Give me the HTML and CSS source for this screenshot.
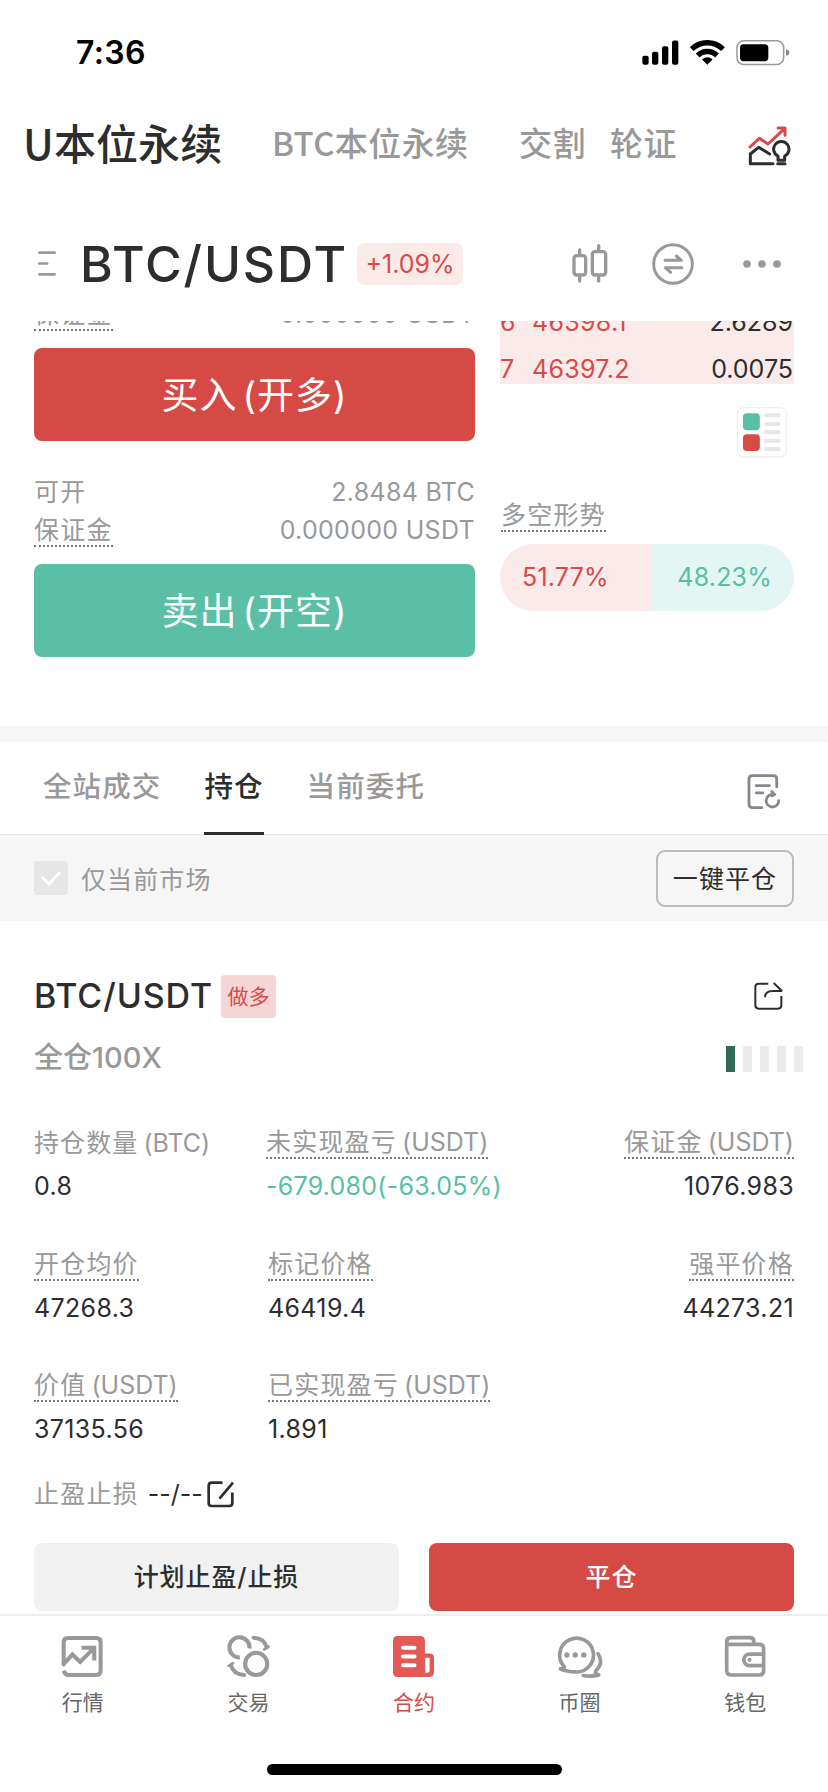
FILE: index.html
```html
<!DOCTYPE html>
<html lang="zh-CN">
<head>
<meta charset="utf-8">
<title>BTC/USDT 合约</title>
<link rel="stylesheet" href="styles.css">
</head>
<body>
<div class="app">
  <div class="status">
    <span class="time">7:36</span>
    <svg class="signals" viewBox="680 114 450 86" width="150" height="29">
      <rect x="684" y="167" width="19" height="27" rx="6"/><rect x="713" y="155" width="19" height="39" rx="6"/><rect x="743" y="138" width="19" height="56" rx="6"/><rect x="773" y="121" width="19" height="73" rx="6"/>
      <g fill="none" stroke="#000" stroke-width="16"><path d="M832 147a67 67 0 0 1 94 0"/><path d="M850 166a41 41 0 0 1 58 0"/></g>
      <path d="M863 178q16-13 32 0l-16 16z"/>
      <rect x="968" y="122" width="140" height="71" rx="20" fill="none" stroke="#999" stroke-width="4.5"/>
      <rect x="977" y="132" width="85" height="51" rx="11"/>
      <path d="M1115 147q10 2 10 10t-10 10z" fill="#888"/>
    </svg>
  </div>

  <div class="markets">
    <span class="market market-on">U本位永续</span>
    <span class="market market-btc">BTC本位永续</span>
    <span class="market market-delivery">交割</span>
    <span class="market">轮证</span>
    <svg class="market-icon" viewBox="1002 378 129 120" width="43" height="40" fill="none" stroke="#2d2d2d" stroke-width="9" stroke-linecap="round" stroke-linejoin="round">
      <path stroke="#d84a4a" d="M1008 441L1036 415L1062 432L1112 386M1092 384H1113V406"/>
      <path d="M1077 491H1009V462L1034 442L1067 462"/>
      <path d="M1092 481V468A23 23 0 1 1 1112 468V481ZM1091 491h22"/>
    </svg>
  </div>

  <div class="ticker">
    <svg class="menu" viewBox="114 754 53 74" width="18" height="25" stroke="#999" stroke-width="8" stroke-linecap="round"><path d="M118 759h45M118 791h23M118 823h45"/></svg>
    <span class="pair">BTC/USDT</span>
    <span class="change">+1.09%</span>
    <div class="ticker-tools">
      <svg viewBox="475 727 108 126" width="36" height="42" fill="none" stroke="#999" stroke-width="10" stroke-linecap="round"><rect x="481" y="765" width="35" height="58" rx="8"/><rect x="536" y="753" width="40" height="70" rx="8"/><path d="M498 748v14M498 826v15M555 735v14M555 826v15"/></svg>
      <svg viewBox="714 727 126 126" width="42" height="42" fill="none" stroke="#999" stroke-width="9" stroke-linecap="round" stroke-linejoin="round"><circle cx="777" cy="790" r="58"/><path d="M753 779h49l-15-13M803 801h-49l16 14"/></svg>
      <svg viewBox="988 778 114 24" width="38" height="8" fill="#999"><circle cx="1000" cy="790" r="11.5"/><circle cx="1045" cy="790" r="11.5"/><circle cx="1090" cy="790" r="11.5"/></svg>
    </div>
  </div>

  <div class="scroll">
    <div class="trade">
      <div class="order">
        <div class="info"><span class="tip">保证金</span><span class="amount">0.000000 USDT</span></div>
        <div class="btn buy">买入<span class="btn-side">(开多)</span></div>
        <div class="info info-first"><span class="name">可开</span><span class="amount">2.8484 BTC</span></div>
        <div class="info"><span class="tip">保证金</span><span class="amount">0.000000 USDT</span></div>
        <div class="btn sell">卖出<span class="btn-side">(开空)</span></div>
      </div>
      <div class="book">
        <div class="asks">
          <div class="asks-list">
            <div class="ask"><span class="rank">6</span><span class="price">46398.1</span><span class="qty">2.6289</span></div>
            <div class="ask"><span class="rank">7</span><span class="price">46397.2</span><span class="qty">0.0075</span></div>
          </div>
        </div>
        <svg class="depth" viewBox="769 323 155 154" width="52" height="51"><rect x="772" y="325" width="149" height="149" rx="20" fill="#fff" stroke="#f0f0f0" stroke-width="4"/><rect x="789" y="342" width="51" height="51" rx="12" fill="#57bfa3"/><rect x="789" y="405" width="51" height="51" rx="12" fill="#d84a46"/><path d="M859 348h38M859 374h38M859 399h38M859 425h38M859 450h38" stroke="#e6e6e6" stroke-width="12" stroke-linecap="round"/></svg>
        <span class="tip trend">多空形势</span>
        <div class="ratio"><span class="long">51.77%</span><span class="short">48.23%</span></div>
      </div>
    </div>

    <div class="divider"></div>

    <div class="tabs">
      <span class="tab">全站成交</span>
      <span class="tab tab-on">持仓</span>
      <span class="tab">当前委托</span>
      <svg class="history" viewBox="354 39 103 110" width="34" height="37" fill="none" stroke="#85898f" stroke-width="8.5" stroke-linecap="round" stroke-linejoin="round"><path d="M399 143H370q-10 0-10-10V56q0-10 10-10h64q10 0 10 10v24M382 76h40M382 98h20M450 122a19 19 0 1 1-17-19M429 94l9 9-8 4"/></svg>
    </div>

    <div class="filter">
      <svg class="check" viewBox="0 0 34 34" width="34" height="34"><rect width="34" height="34" rx="4" fill="#e6e6e6"/><path d="M8 16l7 7L26 11" fill="none" stroke="#fff" stroke-width="3"/></svg>
      <span class="filter-name">仅当前市场</span>
      <span class="close-all">一键平仓</span>
    </div>

    <div class="position">
      <div class="head">
        <span class="head-pair">BTC/USDT</span><span class="side">做多</span>
        <svg class="share" viewBox="437 68 87 84" width="29" height="28" fill="none" stroke="#2d2d2d" stroke-width="6"><path d="M480 73H451q-10 0-10 10v55q0 10 10 10h58q10 0 10-10v-28M470 114q0-19 24-19h27L496 71" stroke-linejoin="bevel"/></svg>
      </div>
      <div class="mode"><span class="lever">全仓100X</span><span class="risk"><i class="bar bar-on"></i><i class="bar"></i><i class="bar"></i><i class="bar"></i><i class="bar"></i></span></div>

      <div class="stats">
        <div class="stat"><span class="plain">持仓数量<span class="unit">(BTC)</span></span><span class="value">0.8</span></div>
        <div class="stat"><span class="tip">未实现盈亏<span class="unit">(USDT)</span></span><span class="value pnl">-679.080(-63.05%)</span></div>
        <div class="stat stat-end"><span class="tip">保证金<span class="unit">(USDT)</span></span><span class="value">1076.983</span></div>
        <div class="stat"><span class="tip">开仓均价</span><span class="value">47268.3</span></div>
        <div class="stat stat-mid"><span class="tip">标记价格</span><span class="value">46419.4</span></div>
        <div class="stat stat-end"><span class="tip">强平价格</span><span class="value">44273.21</span></div>
        <div class="stat"><span class="tip">价值<span class="unit">(USDT)</span></span><span class="value">37135.56</span></div>
        <div class="stat stat-mid"><span class="tip">已实现盈亏<span class="unit">(USDT)</span></span><span class="value">1.891</span></div>
      </div>

      <div class="stops">
        <span class="name">止盈止损</span><span class="dashes">--/--</span>
        <svg viewBox="560 302 80 80" width="27" height="27" fill="none" stroke="#2d2d2d" stroke-width="8"><path d="M606 307H574q-9 0-9 9v51q0 9 9 9h52q9 0 9-9V336M637 307L597 354"/></svg>
      </div>

      <div class="actions"><div class="action plan">计划止盈/止损</div><div class="action close">平仓</div></div>
    </div>
  </div>

  <div class="nav">
    <div class="nav-item">
      <svg viewBox="186 315 128 128" width="43" height="43" fill="none" stroke="#999" stroke-width="12"><path d="M194 402V337q0-13 13-13h84q13 0 13 13v84q0 13-13 13h-84q-9 0-13-13"/><path d="M190 406L220 373L243 395L284 354M247 353h38v38"/></svg>
      <span>行情</span>
    </div>
    <div class="nav-item">
      <svg viewBox="682 315 128 128" width="43" height="43" fill="none" stroke="#999" stroke-width="12"><circle cx="769" cy="401" r="33"/><path d="M749 355A30 30 0 1 0 720 382"/><path d="M761 323q32 2 39 28M733 434q-32-2-39-28" stroke-linecap="round"/><path d="M793 358l13-8M687 407l13-8" stroke-width="8" stroke-linecap="round"/></svg>
      <span>交易</span>
    </div>
    <div class="nav-item nav-on">
      <svg viewBox="1180 315 128 128" width="43" height="43"><path fill="#e15a55" d="M1197 318h67q14 0 14 14v38h14q13 0 13 13v42q0 15-15 15h-93q-14 0-14-14v-94q0-14 14-14z"/><path d="M1213 353h34M1213 379h34M1213 405h34" stroke="#fff" stroke-width="12" stroke-linecap="round"/><path fill="#fff" d="M1279 383h13v38q0 6-6 6h-7z"/></svg>
      <span>合约</span>
    </div>
    <div class="nav-item">
      <svg viewBox="424 313 148 129" width="49" height="43" fill="none" stroke="#999" stroke-width="11" stroke-linecap="round" stroke-linejoin="round"><path d="M440 415q16 0 11-8A51 51 0 1 1 485 424q-26 0-45-9zM554 369q18 27-6 51-5 9 8 13-22 6-47 2"/><g fill="#999" stroke="none"><circle cx="460" cy="373" r="8"/><circle cx="485" cy="373" r="8"/><circle cx="511" cy="373" r="8"/></g></svg>
      <span>币圈</span>
    </div>
    <div class="nav-item">
      <svg viewBox="931 315 128 128" width="43" height="43" fill="none" stroke="#999" stroke-width="11"><path d="M939 343V421q0 13 13 13h84q13 0 13-13V356q0-13-13-13zV336q0-13 13-13h56q12 0 12 12v8M1049 372h-42a17 17 0 0 0 0 34h42"/><circle cx="1007" cy="389" r="6" fill="#999" stroke="none"/></svg>
      <span>钱包</span>
    </div>
  </div>
  <div class="home"></div>
</div>
</body>
</html>
```
FILE: styles.css
```css
* { box-sizing: border-box; }
body { margin: 0; background: #fff; color: #2d2d2d; font-family: Inter, "Noto Sans CJK SC", sans-serif; }
svg { display: block; flex: none; }
.app { width: 828px; height: 1792px; display: flex; flex-direction: column; overflow: hidden; white-space: nowrap; }

.status { height: 98px; flex: none; display: flex; justify-content: space-between; align-items: flex-start; padding: 33px 37px 0 76px; color: #000; }
.time { font-size: 32px; line-height: 40px; font-weight: 600; letter-spacing: .4px; }
.signals { margin-top: 5px; }

.markets { height: 90px; flex: none; display: flex; align-items: center; padding: 0 37px 2px 23px; }
.market { font: 500 33px/50px "Noto Sans CJK SC", sans-serif; color: #999; letter-spacing: .6px; }
.market-on { font-size: 42px; color: #2d2d2d; width: 249px; letter-spacing: .1px; }
.market-btc { width: 247px; letter-spacing: .4px; }
.market-delivery { width: 91px; }
.market-icon { margin: 8px 0 0 auto; }

.ticker { height: 133px; flex: none; display: flex; align-items: center; padding: 18px 47px 0 38px; }
.pair { font-size: 50px; line-height: 60px; font-weight: 500; margin-left: 24px; width: 277px; letter-spacing: 1.9px; }
.change { width: 106px; height: 42px; line-height: 42px; border-radius: 8px; background: #fbeaea; color: #d84a46; font-size: 25px; text-align: center; }
.ticker-tools { margin-left: auto; display: flex; align-items: center; gap: 44px; }
.ticker-tools svg:last-child { margin-left: 5px; }

.scroll { height: 1293px; flex: none; overflow: hidden; }
.trade { height: 405px; display: flex; justify-content: space-between; padding: 0 34px; }
.order { width: 441px; margin-top: -26px; }
.info { height: 38px; display: flex; justify-content: space-between; color: #999; font-size: 25px; line-height: 38px; }
.info-first { margin-top: 32px; }
.name { letter-spacing: 1.2px; color: #999; }
.tip { align-self: flex-start; color: #999; font-size: 25px; line-height: 30px; letter-spacing: 1.2px; border-bottom: 2px dotted #777; }
.info .tip { margin-top: 4px; }
.amount { letter-spacing: .3px; }
.unit { margin-left: 5px; letter-spacing: 0; }
.btn { height: 93px; margin-top: 15px; border-radius: 8px; color: #fff; font-size: 37px; line-height: 95px; text-align: center; letter-spacing: 1px; }
.btn-side { margin-left: 5px; }
.buy { background: #d54a45; }
.sell { background: #5bbfa6; }

.book { width: 294px; display: flex; flex-direction: column; }
.asks { height: 63px; overflow: hidden; background: #faebea; }
.asks-list { margin-top: -22px; }
.ask { height: 47px; line-height: 47px; display: flex; font-size: 25px; color: #d84a46; letter-spacing: .3px; }
.rank { width: 32px; }
.qty { margin-left: auto; color: #2d2d2d; padding-right: 1px; letter-spacing: 0; }
.depth { align-self: flex-end; margin: 23px 6px 0 0; }
.trend { margin: 42px 0 0 1px; }
.ratio { display: flex; margin-top: 12px; height: 67px; line-height: 67px; border-radius: 34px; overflow: hidden; font-size: 25px; letter-spacing: .2px; }
.long { width: 51.77%; background: #faebea; color: #d84a46; padding-left: 22px; }
.short { flex: 1; background: #e3f6f3; color: #57bfa3; text-align: right; padding-right: 22px; }

.divider { height: 16px; background: #f6f6f6; }
.tabs { height: 93px; border-bottom: 1px solid #e6e6e6; display: flex; padding: 0 47px 0 43px; gap: 43px; }
.tab { height: 93px; line-height: 90px; font-size: 28.5px; letter-spacing: 1.1px; font-weight: 500; color: #999; }
.tab-on { color: #2d2d2d; border-bottom: 3px solid #2d2d2d; }
.history { margin: 31px 0 0 auto; }
.filter { height: 86px; display: flex; align-items: center; background: #f6f6f6; padding: 0 34px; font-size: 25px; }
.filter-name { margin-left: 13px; color: #999; letter-spacing: 1.1px; }
.close-all { margin-left: auto; width: 138px; height: 57px; line-height: 54px; border: 2px solid #bbb; border-radius: 9px; text-align: center; letter-spacing: 1.1px; }

.position { padding: 53px 34px 0; }
.head { height: 44px; display: flex; align-items: center; }
.head-pair { font-size: 34px; font-weight: 500; width: 187px; line-height: 44px; letter-spacing: .9px; }
.side { width: 55px; height: 43px; line-height: 43px; border-radius: 4px; background: #f5d6d6; color: #d84a46; font-size: 21px; text-align: center; }
.share { margin: 0 11px 0 auto; }
.mode { height: 60px; margin-top: 11px; display: flex; justify-content: space-between; align-items: center; }
.lever { font-size: 29px; line-height: 40px; font-weight: 500; color: #999; padding-bottom: 3px; }
.risk { display: flex; gap: 8px; margin-right: -9px; }
.bar { width: 9px; height: 26px; background: #ebebeb; }
.bar-on { background: #2f6b58; }
.stats { display: grid; grid-template-columns: 232px 1fr auto; row-gap: 47.5px; margin-top: 38px; }
.stat { height: 74px; display: flex; flex-direction: column; align-items: flex-start; }
.plain { font-size: 25px; line-height: 32px; letter-spacing: 1.1px; color: #999; }
.value { margin-top: 12px; font-size: 25px; line-height: 30px; letter-spacing: .35px; }
.pnl { color: #57bfa3; letter-spacing: .25px; }
.stat-mid { padding-left: 2px; }
.stat-end { align-items: flex-end; }
.stat-end .tip { align-self: flex-end; }
.stops { height: 30px; margin-top: 35px; display: flex; align-items: center; font-size: 25px; line-height: 30px; }
.dashes { margin-left: 9px; width: 59px; }
.actions { display: flex; gap: 30px; margin-top: 34px; }
.action { flex: 1; height: 68px; line-height: 68px; border-radius: 8px; font-size: 25px; font-weight: 500; text-align: center; letter-spacing: .9px; }
.plan { background: #f1f1f1; }
.close { background: #d54a45; color: #fff; }

.nav { height: 150px; flex: none; border-top: 2px solid #eee; padding-top: 19px; display: flex; }
.nav-item { flex: 1; display: flex; flex-direction: column; align-items: center; gap: 9px; font-size: 21px; line-height: 32px; color: #666; }
.nav-on { color: #d84a46; }
.home { width: 295px; height: 11px; flex: none; border-radius: 6px; background: #000; margin: 0 auto; }
```
